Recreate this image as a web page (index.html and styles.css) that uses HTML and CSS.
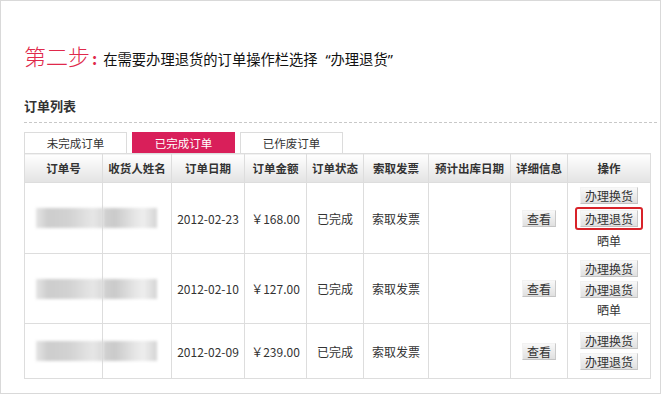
FILE: index.html
```html
<!DOCTYPE html>
<html lang="zh-CN">
<head>
<meta charset="utf-8">
<title>第二步</title>
<link rel="stylesheet" href="styles.css">
</head>
<body>
<div class="frame">
  <h1 class="step"><span class="step-num">第二步</span><span class="step-colon">:</span><span class="step-text">在需要办理退货的订单操作栏选择 “办理退货”</span></h1>
  <h2 class="list-title">订单列表</h2>
  <div class="tabs">
    <div class="tab">未完成订单</div>
    <div class="tab tab-active">已完成订单</div>
    <div class="tab">已作废订单</div>
  </div>
  <table class="orders">
    <colgroup>
      <col class="c1"><col class="c2"><col class="c3"><col class="c4"><col class="c5"><col class="c6"><col class="c7"><col class="c8"><col class="c9">
    </colgroup>
    <thead>
      <tr><th>订单号</th><th>收货人姓名</th><th>订单日期</th><th>订单金额</th><th>订单状态</th><th>索取发票</th><th>预计出库日期</th><th>详细信息</th><th>操作</th></tr>
    </thead>
    <tbody>
      <tr class="r1">
        <td><div class="blur blur-a"></div></td>
        <td><div class="blur blur-b"></div></td>
        <td>2012-02-23</td>
        <td>￥168.00</td>
        <td>已完成</td>
        <td>索取发票</td>
        <td></td>
        <td><button class="btn">查看</button></td>
        <td><div class="ops"><button class="btn">办理换货</button><span class="hl"><button class="btn">办理退货</button></span><span class="share">晒单</span></div></td>
      </tr>
      <tr class="r2">
        <td><div class="blur blur-a"></div></td>
        <td><div class="blur blur-b"></div></td>
        <td>2012-02-10</td>
        <td>￥127.00</td>
        <td>已完成</td>
        <td>索取发票</td>
        <td></td>
        <td><button class="btn">查看</button></td>
        <td><div class="ops"><button class="btn">办理换货</button><button class="btn">办理退货</button><span class="share">晒单</span></div></td>
      </tr>
      <tr class="r3">
        <td><div class="blur blur-a"></div></td>
        <td><div class="blur blur-b"></div></td>
        <td>2012-02-09</td>
        <td>￥239.00</td>
        <td>已完成</td>
        <td>索取发票</td>
        <td></td>
        <td><button class="btn">查看</button></td>
        <td><div class="ops"><button class="btn">办理换货</button><button class="btn">办理退货</button></div></td>
      </tr>
    </tbody>
  </table>
</div>
</body>
</html>
```

FILE: styles.css
```css
* { box-sizing: border-box; }
html, body { margin: 0; padding: 0; background: #fff; }
body { font-family: "Noto Sans CJK SC", "Noto Sans", sans-serif; color: #333; }

.frame {
  width: 661px;
  height: 394px;
  border: 1px solid #d9d9d9;
  padding: 39px 0 0 23px;
}

.step {
  margin: 0;
  height: 30px;
  line-height: 30px;
  font-weight: normal;
  display: flex;
  align-items: baseline;
  white-space: nowrap;
}
.step-num { font-size: 22px; color: #e0294b; font-weight: 300; }
.step-colon { font-size: 16px; color: #e0294b; font-weight: bold; margin: 0 6px 0 2px; }
.step-text {
  font-family: "Noto Sans", "Noto Sans CJK SC", sans-serif;
  font-size: 14.3px;
  word-spacing: 4px;
  color: #111;
}

.list-title {
  margin: 26px 0 0;
  width: 633px;
  font-size: 13px;
  font-weight: bold;
  line-height: 20px;
  padding-bottom: 6px;
  border-bottom: 1px dashed #c8c8c8;
  color: #333;
}

.tabs { display: flex; gap: 5px; margin-top: 9px; height: 21px; }
.tab {
  width: 103px;
  height: 21px;
  border: 1px solid #dcdcdc;
  border-bottom: 0;
  font-size: 11.5px;
  line-height: 20px;
  text-align: center;
  color: #333;
}
.tab-active { background: #d91f5a; border-color: #d91f5a; color: #fff; }

.orders {
  border-collapse: collapse;
  table-layout: fixed;
  width: 626px;
  font-size: 12px;
  color: #333;
}
.c1 { width: 78px; } .c2 { width: 69px; } .c3 { width: 73px; } .c4 { width: 62px; }
.c5 { width: 57px; } .c6 { width: 65px; } .c7 { width: 82px; } .c8 { width: 57px; } .c9 { width: 83px; }

.orders th, .orders td {
  border: 1px solid #dddddd;
  text-align: center;
  vertical-align: middle;
  padding: 0;
}
.orders th {
  height: 29px;
  background: linear-gradient(#ffffff, #e3e3e3);
  font-size: 11.5px;
  font-weight: bold;
  color: #333;
}
.r1 td { height: 71px; }
.r2 td { height: 70px; }
.r3 td { height: 55px; }

.blur { height: 20px; filter: blur(1.5px); }
.blur-a {
  margin-left: 11px;
  width: 67px;
  background: linear-gradient(to right, #e4e4e4 0%, #cdcdcd 18%, #d2d2d2 50%, #e6e6e6 85%, #dadada 100%);
}
.blur-b {
  width: 54px;
  background: linear-gradient(to right, #d2d2d2 0%, #cacaca 22%, #e6e6e6 60%, #eeeeee 75%, #d4d4d4 100%);
}

.btn {
  font-family: inherit;
  font-size: 12px;
  line-height: 15px;
  height: 17px;
  padding: 0 4px;
  margin: 0;
  color: #333;
  border: 1px solid;
  border-color: #f2f2f2 #cacaca #c4c4c4 #f2f2f2;
  background: linear-gradient(#f8f8f8, #e0e0e0);
  border-radius: 0;
}

.ops { display: flex; flex-direction: column; align-items: center; gap: 4px; }
.hl {
  display: block;
  border: 2px solid #d8232a;
  border-radius: 3px;
  padding: 1px 3px;
  margin: -1px 0;
}
.share { line-height: 16px; font-size: 12px; }
```
